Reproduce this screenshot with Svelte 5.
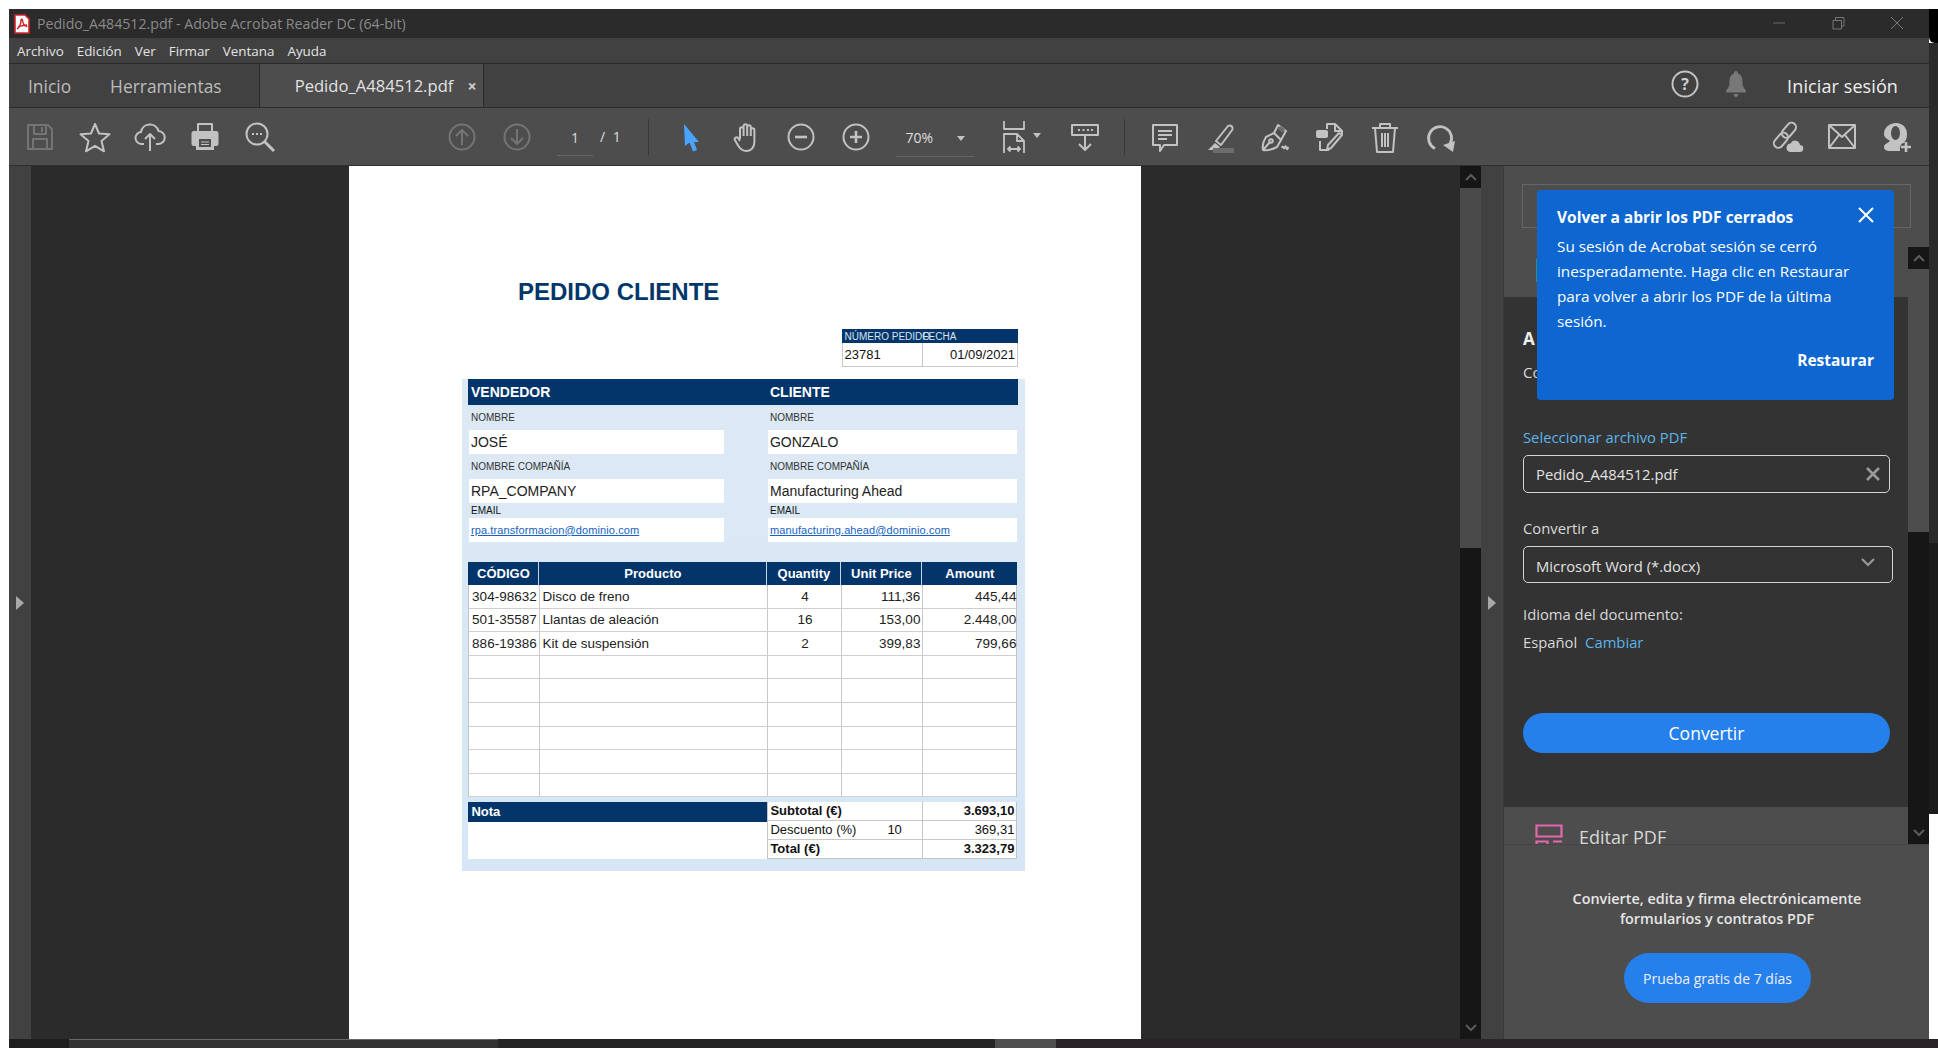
<script>
  const menu = [['Archivo',17],['Edición',84],['Ver',148],['Firmar',186],['Ventana',243],['Ayuda',312]];
  const items = [
    ['304-98632','Disco de freno','4','111,36','445,44'],
    ['501-35587','Llantas de aleación','16','153,00','2.448,00'],
    ['886-19386','Kit de suspensión','2','399,83','799,66'],
    ['','','','',''],['','','','',''],['','','','',''],['','','','',''],['','','','',''],['','','','','']
  ];
</script>

<div class="screen">
  <div class="topgap"></div>
  <div class="win">
    <header class="title">
      <svg class="pdf" width="16" height="20" viewBox="0 0 16 20"><path d="M1 1h10l4 4v14H1z" fill="#fff" stroke="#d4252a" stroke-width="1.6"/><path d="M3 15c3-2 4-6 4-9 0-1 1.500-1 1.500 0 0 3 2 6 5 6.500M4 13c3-1 6-2 9-2" fill="none" stroke="#d4252a" stroke-width="1.500"/></svg>
      <span class="ttext">Pedido_A484512.pdf - Adobe Acrobat Reader DC (64-bit)</span>
      <div class="wc">
        <svg width="16" height="16" viewBox="0 0 16 16"><path d="M2 8h12" stroke="#666" fill="none"/></svg>
        <svg width="16" height="16" viewBox="0 0 16 16"><path d="M3 5.500h8.500V14H3zM5.500 5V2.500H14V11h-2.500" stroke="#777" fill="none"/></svg>
        <svg width="16" height="16" viewBox="0 0 16 16"><path d="M2 2l12 12M14 2L2 14" stroke="#777" fill="none"/></svg>
      </div>
    </header>
    <nav class="menu">
      {#each menu as m}<span>{m[0]}</span>{/each}
    </nav>
    <div class="tabs">
      <span class="t1">Inicio</span>
      <span class="t2">Herramientas</span>
      <div class="tab"><span>Pedido_A484512.pdf</span><b>×</b></div>
      <div class="tright">
        <svg width="30" height="30" viewBox="0 0 30 30"><circle cx="15" cy="15" r="12.500" fill="none" stroke="#c4c4c4" stroke-width="2"/><text x="15" y="20.500" text-anchor="middle" class="q">?</text></svg>
        <svg class="bell" width="24" height="30" viewBox="0 0 24 30"><path d="M12 2c1.500 0 2 1 2 2.500 4 1.500 4.500 5 4.500 9 0 4 1.500 6 3.500 8v2H2v-2c2-2 3.500-4 3.500-8 0-4 .5-7.500 4.500-9C10 3 10.500 2 12 2zM9.500 25h5c0 1.500-1 3-2.500 3s-2.500-1.500-2.500-3z" fill="#787878"/></svg>
        <span class="login">Iniciar sesión</span>
      </div>
    </div>
    <div class="tools">
      <div class="btn dim"><svg width="32" height="32" viewBox="0 0 32 32"><path d="M4 4h20l4 4v20H4zM10 4v9h12V4M9 28V18h14v10M18 6v5"/></svg></div>
      <div class="btn"><svg width="32" height="32" viewBox="0 0 32 32"><path d="M16 3l4 9.500 10.500.8-8 6.800 2.500 10.200L16 24.800 7 30.300l2.500-10.200-8-6.800 10.500-.8z"/></svg></div>
      <div class="btn"><svg width="32" height="32" viewBox="0 0 32 32"><path d="M10 23H8a6 6 0 0 1-1-12 9 9 0 0 1 17.500-1A6.500 6.500 0 0 1 24 23h-2M16 30V13M11 18l5-5 5 5"/></svg></div>
      <div class="btn"><svg width="32" height="32" viewBox="0 0 32 32"><path d="M9 3h14v8H9z"/><path class="fill" d="M5 10h22a2.500 2.500 0 0 1 2.500 2.500V23a2 2 0 0 1-2 2H25v4H7v-4H4.500a2 2 0 0 1-2-2V12.500A2.500 2.500 0 0 1 5 10z"/><path class="hole" d="M10 18h12v8H10z"/><path class="fill" d="M12 20.500h8v1h-8zM12 23h8v1h-8z"/></svg></div>
      <div class="btn"><svg width="32" height="32" viewBox="0 0 32 32"><circle cx="13" cy="13" r="10.500"/><path d="M20.500 20.500L30 30" stroke-width="3"/><path class="fill" d="M8 12h2v2H8zM12 12h2v2h-2zM16 12h2v2h-2z"/></svg></div>

      <div class="btn dim up"><svg width="32" height="32" viewBox="0 0 32 32"><circle cx="16" cy="16" r="12.500"/><path d="M16 24V9M10 15l6-6 6 6"/></svg></div>
      <div class="btn dim"><svg width="32" height="32" viewBox="0 0 32 32"><circle cx="16" cy="16" r="12.500"/><path d="M16 8v15M10 17l6 6 6-6"/></svg></div>
      <div class="page"><span>1</span></div>
      <span class="of">/ 1</span>
      <i class="sep s1"></i>

      <div class="btn arrow"><svg width="32" height="32" viewBox="0 0 32 32"><path class="blue" d="M9 3l15 18h-5l3 8-4 1.500-3.500-9L10 25z"/></svg></div>
      <div class="btn"><svg width="32" height="32" viewBox="0 0 32 32"><path d="M10 18V8a1.800 1.800 0 0 1 3.600 0v7M13.600 15V5a1.800 1.800 0 0 1 3.600 0v10M17.200 15V6a1.800 1.800 0 0 1 3.600 0v9M20.800 15V9a1.800 1.800 0 0 1 3.600 0v12c0 5-3 9-8 9-4 0-6-2-8-5l-3.500-6a1.900 1.900 0 0 1 3.200-2L10 20"/></svg></div>
      <div class="btn"><svg width="32" height="32" viewBox="0 0 32 32"><circle cx="16" cy="16" r="12.500"/><path d="M10 16h12" stroke-width="2.600"/></svg></div>
      <div class="btn"><svg width="32" height="32" viewBox="0 0 32 32"><circle cx="16" cy="16" r="12.500"/><path d="M10 16h12M16 10v12" stroke-width="2.600"/></svg></div>
      <div class="zoomc"><span>70%</span><em></em></div>
      <div class="btn fit"><svg width="32" height="32" viewBox="0 0 32 32"><path d="M6 0v8h20V0M6 32V13h13l7 7v12M19 13v7h7M10 28h12M12.500 25.500L10 28l2.500 2.500M19.500 25.500L22 28l-2.500 2.500" stroke-width="1.800"/></svg><em></em></div>
      <div class="btn read"><svg width="32" height="32" viewBox="0 0 32 32"><path d="M3 4h26v10H3zM16 14v15M10 23l6 6 6-6"/><path class="fill" d="M9 8h2v2H9zM13.500 8h2v2h-2zM18 8h2v2h-2zM22 8h2v2h-2z"/></svg></div>
      <i class="sep s2"></i>

      <div class="btn"><svg width="32" height="32" viewBox="0 0 32 32"><path d="M4 4h24v20H15l-4 6v-6H4zM9 10h14M9 14h14M9 18h9"/></svg></div>
      <div class="btn"><svg width="32" height="32" viewBox="0 0 32 32"><path d="M12 20L24 5a3 3 0 0 1 4.500 3.500L17 24z"/><path class="fill" d="M11 22l-2 2-5 5h8l4-3z"/><path class="soft" d="M9 27h21v5H9z"/></svg></div>
      <div class="btn"><svg width="32" height="32" viewBox="0 0 32 32"><path d="M4 29c-1-5 1-10 3-13l8-4 7 7-4 7c-4 2-9 4-14 3zM4 29l7-8M15 12l4-8 8 6-5 9M23 27c1-4 1.500 2 2.500 0s1-3 2 0 1 0 2-1"/><circle cx="12" cy="20" r="1.800"/><path class="soft" d="M21 5l5 3-2 4-5-4z"/></svg></div>
      <div class="btn"><svg width="32" height="32" viewBox="0 0 32 32"><path d="M13 8V3h8l7 7v3M21 3v7h7M6 20v9h9"/><rect class="fill" x="2" y="9" width="12" height="8" rx="2"/><path d="M28 14L17 27l-4 2 1-5 11-12z"/></svg></div>
      <div class="btn"><svg width="32" height="32" viewBox="0 0 32 32"><path d="M3 7h26M11 7V3h10v4M6 7l2 24h16l2-24zM13 12v14M16 12v14M19 12v14"/></svg></div>
      <div class="btn"><svg width="32" height="32" viewBox="0 0 32 32"><path d="M11 27.500A11.500 11.500 0 1 1 26 23" stroke-width="2.800"/><path class="fill" d="M19 24l12-4-2 11z"/></svg></div>

      <div class="btn push"><svg width="32" height="32" viewBox="0 0 32 32"><rect x="13" y="1" width="9" height="17" rx="4.500" transform="rotate(40 18 10)"/><rect x="5" y="11" width="9" height="17" rx="4.500" transform="rotate(40 10 20)"/><path class="fill" d="M19 31h9.500a3.500 3.500 0 0 0 .5-7 5 5 0 0 0-9.500-1.500A4.300 4.300 0 0 0 19 31z"/></svg></div>
      <div class="btn"><svg width="32" height="32" viewBox="0 0 32 32"><path d="M3 4h26v23H3zM3 4l13 12L29 4M3 27l10-13M29 27L19 14"/></svg></div>
      <div class="btn"><svg width="32" height="32" viewBox="0 0 32 32"><path class="fill" d="M15 2c7 0 11 5 11 11 0 4-1 6-3 9-2 0-4 2-4 5v3H9c-3 0-6-1-6-4 0-3 4-4 6-6-2-2-6-3-6-7C3 7 8 2 15 2z"/><ellipse class="hole" cx="14.500" cy="12" rx="4.500" ry="7"/><path d="M25 21v10M20 26h10" stroke-width="2.600"/></svg></div>
    </div>

    <main class="content">
      <div class="hinge"><span class="tri"></span></div>
      <div class="doc">
        <article class="sheet">
          <h1>PEDIDO CLIENTE</h1>
          <div class="order">
            <div class="ohead"><span>NÚMERO PEDIDO</span><span>FECHA</span></div>
            <div class="orow"><span>23781</span><span>01/09/2021</span></div>
          </div>
          <section class="blue">
            <div class="band"><span>VENDEDOR</span><span>CLIENTE</span></div>
            <div class="form">
              <label>NOMBRE</label><label>NOMBRE</label>
              <div class="f">JOSÉ</div><div class="f">GONZALO</div>
              <label>NOMBRE COMPAÑÍA</label><label>NOMBRE COMPAÑÍA</label>
              <div class="f">RPA_COMPANY</div><div class="f">Manufacturing Ahead</div>
              <label class="dk">EMAIL</label><label class="dk">EMAIL</label>
              <div class="f link">rpa.transformacion@dominio.com</div><div class="f link">manufacturing.ahead@dominio.com</div>
            </div>
            <div class="thead grid"><span>CÓDIGO</span><span>Producto</span><span>Quantity</span><span>Unit Price</span><span>Amount</span></div>
            {#each items as r}
              <div class="trow grid"><span class="c">{r[0]}</span><span class="l">{r[1]}</span><span class="c">{r[2]}</span><span class="r">{r[3]}</span><span class="r">{r[4]}</span></div>
            {/each}
            <div class="foot">
              <div class="note"><div class="nh">Nota</div></div>
              <div class="sum">
                <div class="sr b"><span>Subtotal (€)</span><span>3.693,10</span></div>
                <div class="sr"><span class="dis"><span>Descuento (%)</span><span>10</span></span><span>369,31</span></div>
                <div class="sr b"><span>Total (€)</span><span>3.323,79</span></div>
              </div>
            </div>
          </section>
        </article>
      </div>
      <div class="sb1">
        <div class="sba"><svg width="14" height="10" viewBox="0 0 14 10"><path d="M2 8l5-5 5 5" fill="none" stroke="#5c5c5c" stroke-width="2"/></svg></div>
        <div class="thumb1"></div>
        <div class="sbrest"></div>
        <div class="sba"><svg width="14" height="10" viewBox="0 0 14 10"><path d="M2 2l5 5 5-5" fill="none" stroke="#5c5c5c" stroke-width="2"/></svg></div>
      </div>
      <div class="hinge h2"><span class="tri"></span></div>
      <aside class="panel">
        <div class="scroll">
          <div class="pcol">
            <div class="upper"><div class="outline"></div><div class="teal"></div></div>
            <div class="dark">
              <div class="h3">A</div>
              <div class="sub">Co</div>
              <div class="lab blue-t">Seleccionar archivo PDF</div>
              <div class="inp"><span>Pedido_A484512.pdf</span><svg width="16" height="16" viewBox="0 0 16 16"><path d="M2 2l12 12M14 2L2 14" stroke="#9a9a9a" stroke-width="2.600" fill="none"/></svg></div>
              <div class="lab conv">Convertir a</div>
              <div class="sel"><span>Microsoft Word (*.docx)</span><svg width="16" height="12" viewBox="0 0 16 12"><path d="M2 3l6 6 6-6" stroke="#9a9a9a" stroke-width="2.200" fill="none"/></svg></div>
              <div class="lab idi">Idioma del documento:</div>
              <div class="lab esp">Español <a>Cambiar</a></div>
              <div class="cbtn">Convertir</div>
            </div>
            <div class="lower">
              <svg width="28" height="24" viewBox="0 0 28 24"><path d="M1.500 1.500h25v11h-25zM1.500 17.500h11v8h-11zM18 17.500h9" fill="none" stroke="#e667ad" stroke-width="2.200"/></svg>
              <span>Editar PDF</span>
            </div>
          </div>
          <div class="sb2">
            <div class="sbtop"></div>
            <div class="sba"><svg width="14" height="10" viewBox="0 0 14 10"><path d="M2 8l5-5 5 5" fill="none" stroke="#5c5c5c" stroke-width="2"/></svg></div>
            <div class="thumb2"></div>
            <div class="sbrest"></div>
            <div class="sba"><svg width="14" height="10" viewBox="0 0 14 10"><path d="M2 2l5 5 5-5" fill="none" stroke="#5c5c5c" stroke-width="2"/></svg></div>
          </div>
        </div>
        <div class="promo">
          <p>Convierte, edita y firma electrónicamente<br>formularios y contratos PDF</p>
          <div class="trial">Prueba gratis de 7 días</div>
        </div>
        <div class="popup">
          <div class="phead"><strong>Volver a abrir los PDF cerrados</strong><svg width="16" height="16" viewBox="0 0 16 16"><path d="M1 1l14 14M15 1L1 15" stroke="#fff" stroke-width="2" fill="none"/></svg></div>
          <p>Su sesión de Acrobat sesión se cerró inesperadamente. Haga clic en Restaurar para volver a abrir los PDF de la última sesión.</p>
          <div class="restore">Restaurar</div>
        </div>
      </aside>
    </main>
  </div>
  <div class="sliver"><div class="blk"></div><div class="g1"></div><div class="g2"></div><div class="wh"></div></div>
  <footer class="strip">
    <i class="a"></i><i class="b"></i><i class="c"></i><i class="d"></i><i class="e"><span>10:22</span></i>
  </footer>
</div>

<style>
  :global(body){margin:0;background:#fff;}
  .screen{width:1938px;height:1048px;display:grid;grid-template-columns:9px 1920px 9px;grid-template-rows:9px 1030px 9px;overflow:hidden;font-family:"Open Sans","Noto Sans",sans-serif;}
  .topgap{grid-column:1/4;}
  .win{grid-column:2;grid-row:2;display:flex;flex-direction:column;background:#414141;min-height:0;}
  .sliver{grid-column:3;grid-row:2;display:flex;flex-direction:column;}
  .blk{height:34px;background:#000;border-bottom-left-radius:6px;}
  .g1{height:500px;background:#2a2a2a;}
  .g2{height:271px;background:#1b1b1b;}
  .wh{flex:1;background:#fff;}
  .strip{grid-column:2/4;grid-row:3;display:flex;background:#262326;overflow:hidden;}
  .strip i{display:block;height:9px;}
  .strip .a{width:60px;background:#1e1e1e;}
  .strip .b{width:429px;background:#333;border-top:1px solid #666;height:8px;}
  .strip .c{width:497px;background:#252525;}
  .strip .d{width:61px;background:#4f4f4f;}
  .strip .e{flex:1;position:relative;background:#282428;}
  .strip .e span{display:block;margin:5px 0 0 747px;font:13px/16px "Open Sans",sans-serif;color:#eee;font-style:normal;}

  .title{height:29px;background:#2b2b2b;display:flex;align-items:center;color:#8a8a8a;flex:none;}
  .pdf{margin-left:5px;}
  .ttext{margin-left:7px;font-size:14.2px;letter-spacing:-.02px;white-space:nowrap;}
  .wc{margin-left:auto;display:flex;gap:43px;padding-right:24px;margin-top:-2px;}

  .menu{height:25px;flex:none;display:flex;align-items:center;padding-left:8px;gap:13px;border-bottom:1px solid #2a2a2a;color:#e4e4e4;font-size:13.4px;}
  .tabs{height:43px;flex:none;display:flex;align-items:stretch;border-bottom:1px solid #2a2a2a;color:#bcbcbc;font-size:17.4px;}
  .t1{margin-left:19px;align-self:center;}
  .t2{margin-left:39px;align-self:center;}
  .tab{margin-left:37px;width:225px;background:#4d4d4d;border-left:1px solid #2a2a2a;border-right:1px solid #2a2a2a;display:flex;align-items:center;padding-left:35px;box-sizing:border-box;color:#e2e2e2;font-size:16.600px;}
  .tab b{margin-left:14px;font-size:16px;color:#ccc;}
  .tright{margin-left:auto;display:flex;align-items:center;padding-right:31px;}
  .tright svg{margin-top:-4px;}
  .bell{margin-left:24px;}
  .q{font:bold 16px "Open Sans",sans-serif;fill:#d0d0d0;}
  .login{margin-left:39px;font-size:18px;font-weight:500;color:#eee;letter-spacing:.1px;}

  .tools{height:57px;flex:none;background:#4d4d4d;border-bottom:1px solid #2f2f2f;display:flex;align-items:center;padding:0 4.500px 0 3.500px;color:#ddd;}
  .btn{width:55px;height:34px;display:flex;align-items:center;justify-content:center;flex:none;position:relative;}
  .btn svg{fill:none;stroke:#c2c2c2;stroke-width:2;stroke-linejoin:round;overflow:visible;}
  .btn.dim svg{stroke:#747474;}
  .fill{fill:#c2c2c2;stroke:none;}
  .btn svg .fill{fill:#c2c2c2;stroke:none;}
  .btn svg .hole{fill:#4d4d4d;stroke:none;}
  .btn svg .soft{fill:#6c6c6c;stroke:none;}
  .btn svg .blue{fill:#4aa3ff;stroke:none;}
  .up{margin-left:147px;}
  .page{margin-left:12.500px;width:36px;height:36px;border-bottom:1px solid #666;box-sizing:border-box;display:flex;align-items:center;justify-content:center;font-size:14px;margin-top:2px;}
  .of{margin-left:7px;font-size:14px;width:22px;white-space:pre;word-spacing:4px;}
  .sep{width:1px;height:36px;background:#383838;flex:none;}
  .s1{margin-left:26px;}
  .s1 + .btn{margin-left:14px;}
  .zoomc{margin-left:12.500px;width:78px;height:38px;border-bottom:1px solid #666;box-sizing:border-box;display:flex;align-items:center;padding-left:10px;font-size:14px;position:relative;margin-top:2px;}
  .zoomc em,.fit em{position:absolute;width:0;height:0;border:4px solid transparent;border-top:5px solid #c2c2c2;border-bottom:0;}
  .zoomc em{left:61px;top:17px;}
  .fit{margin-left:12.500px;}
  .fit svg{height:32px;}
  .fit em{left:47px;top:13px;}
  .read{margin-left:16px;}
  .s2{margin-left:12px;}
  .s2 + .btn{margin-left:12.500px;}
  .push{margin-left:auto;}

  .content{flex:1;display:flex;min-height:0;}
  .hinge{width:22px;background:#414141;display:flex;align-items:center;justify-content:center;flex:none;}
  .h2{width:23px;border-right:1px solid #3a3a3a;box-sizing:border-box;}
  .tri{width:0;height:0;border:7px solid transparent;border-left:8px solid #a8a8a8;border-right:0;}
  .doc{flex:1;background:#2b2b2b;padding-left:318px;overflow:hidden;min-width:0;}

  .sheet{width:792px;height:100%;background:#fff;box-sizing:border-box;padding-top:112px;font-family:"Liberation Sans Narrow","Liberation Sans",sans-serif;color:#111;overflow:hidden;}
  h1{margin:0 0 0 169px;font:bold 24px/28px "Liberation Sans",sans-serif;color:#03376b;white-space:nowrap;}
  .order{margin:23px 0 0 492.500px;width:176.500px;font-size:12px;}
  .ohead{height:14px;background:#03356a;color:#d8e4f0;display:flex;align-items:center;font-size:10px;}
  .ohead span:first-child{width:81px;padding-left:3px;box-sizing:border-box;white-space:nowrap;}
  .orow{height:24px;display:flex;border:solid #c8c8c8;border-width:0 1px 1px 1px;box-sizing:border-box;font-size:13px;align-items:stretch;}
  .orow span{display:flex;align-items:center;}
  .orow span:first-child{width:80px;padding-left:2px;box-sizing:border-box;border-right:1px solid #c8c8c8;}
  .orow span:last-child{flex:1;justify-content:flex-end;padding-right:2px;}
  .blue{margin:12px 0 0 113px;width:563px;height:492px;box-sizing:border-box;padding:0 7px 0 6.400px;background:linear-gradient(#dde9f5,#d6e6f6);}
  .band{height:26px;background:#03356a;color:#fff;font-weight:bold;font-size:14px;display:flex;align-items:center;}
  .band span:first-child{width:301.600px;padding-left:2.600px;box-sizing:border-box;}
  .form{display:grid;grid-template-columns:255px 249px;column-gap:44px;grid-template-rows:25px 24px 25px 24px 15px 24px;margin-left:.600px;}
  .form label{font-size:10px;color:#333;align-self:center;padding-left:2px;white-space:nowrap;}
  .form label.dk{color:#111;}
  .f{background:#fff;font-size:14px;display:flex;align-items:center;padding-left:2px;white-space:nowrap;color:#222;}
  .f.link{font-family:"Liberation Sans",sans-serif;font-size:11px;letter-spacing:.1px;color:#1562c4;text-decoration:underline;}
  .grid{display:grid;grid-template-columns:71px 228px 74px 81px 95px;width:549px;box-sizing:border-box;}
  .thead{margin-top:20px;height:23px;background:#03356a;color:#fff;font-size:13px;font-weight:bold;text-align:center;align-items:center;}
  .thead span{border-right:1px solid #c8d4e0;height:100%;display:flex;align-items:center;justify-content:center;box-sizing:border-box;}
  .thead span:last-child{border:0;}
  .trow{height:23.600px;background:#fff;border-bottom:1px solid #cfcfcf;border-left:1px solid #c4c4c4;border-right:1px solid #c4c4c4;font-size:13.500px;color:#222;}
  .trow span{display:flex;align-items:center;border-right:1px solid #c8c8c8;padding:0 2px;box-sizing:border-box;white-space:nowrap;overflow:hidden;}
  .trow span:last-child{border-right:0;}
  .c{justify-content:center;}
  .r{justify-content:flex-end;}
  .foot{margin-top:4.500px;display:flex;height:57px;width:549px;}
  .note{width:299px;background:#fff;}
  .nh{height:20px;background:#03356a;color:#fff;font-weight:bold;font-size:13px;display:flex;align-items:center;padding-left:3px;}
  .sum{flex:1;background:#fff;border:solid #c4c4c4;border-width:0 1px 1px 1px;box-sizing:border-box;display:flex;flex-direction:column;}
  .sr{flex:1;display:flex;justify-content:space-between;align-items:center;font-size:13px;padding:0 2px;border-bottom:1px solid #c8c8c8;position:relative;background:linear-gradient(90deg,transparent 154px,#c4c4c4 154px,#c4c4c4 155px,transparent 155px);}
  .sr:last-child{border-bottom:0;}
  .b{font-weight:bold;}
  .dis{display:flex;gap:31px;}

  .sb1,.sb2{width:21px;flex:none;background:#161616;display:flex;flex-direction:column;}
  .sba{height:22px;display:flex;align-items:center;justify-content:center;flex:none;background:#161616;}
  .thumb1{height:360px;background:#4a4a4a;}
  .thumb2{height:263px;background:#4d4d4d;}
  .sbrest{flex:1;}
  .sbtop{height:81px;background:#4d4d4d;}

  .panel{width:425px;flex:none;position:relative;display:flex;flex-direction:column;background:#4d4d4d;}
  .scroll{height:678px;display:flex;flex:none;overflow:hidden;}
  .pcol{width:404px;flex:none;display:flex;flex-direction:column;}
  .upper{height:131px;background:#4d4d4d;position:relative;padding:18px 0 0 18px;box-sizing:border-box;}
  .outline{width:389px;height:44px;border:1px solid #666;box-sizing:border-box;margin-right:-3px;}
  .teal{width:2px;height:23px;background:#2c8f8c;margin:31px 0 0 14px;}
  .dark{height:510px;background:#333;padding-left:19px;box-sizing:border-box;color:#d8d8d8;font-size:14.800px;position:relative;}
  .h3{margin-top:31px;font-size:17px;font-weight:700;line-height:22px;color:#eee;}
  .sub{margin-top:11px;font-size:15px;line-height:22px;}
  .lab{line-height:20px;white-space:nowrap;}
  .blue-t{margin-top:44px;color:#5cb4ea;}
  .inp{margin-top:8px;width:367px;height:38px;border:1px solid #d4d4d4;border-radius:5px;box-sizing:border-box;display:flex;align-items:center;justify-content:space-between;padding:0 8px 0 12px;color:#e2e2e2;}
  .conv{margin-top:25px;}
  .sel{margin-top:8px;width:370px;height:37px;border:1px solid #d4d4d4;border-radius:5px;box-sizing:border-box;display:flex;align-items:center;justify-content:space-between;padding:2px 16px 0 12px;color:#e2e2e2;}
  .sel svg{margin-top:-7px;}
  .idi{margin-top:21px;}
  .esp{margin-top:8px;}
  .esp a{color:#5cb4ea;margin-left:4px;}
  .cbtn{margin-top:61px;width:367px;height:40px;border-radius:20px;background:#2680eb;color:#fff;display:flex;align-items:center;justify-content:center;font-size:17.500px;}
  .lower{flex:1;min-height:0;overflow:hidden;background:#4d4d4d;display:flex;align-items:flex-start;padding:17px 0 0 31px;color:#d8d8d8;font-size:18px;}
  .lower span{margin:-2px 0 0 16px;line-height:30px;}

  .promo{flex:1;border-top:1px solid #444;box-sizing:border-box;text-align:center;padding-left:2px;color:#e6e6e6;width:425px;margin-right:0;}
  .promo p{margin:44px 0 0 -1px;font-size:14.400px;font-weight:600;line-height:20px;}
  .trial{margin:24px 0 0 118px;width:187px;height:50px;border-radius:25px;background:#2680eb;color:#eef;display:flex;align-items:center;justify-content:center;font-size:14px;}

  .popup{position:absolute;left:33px;top:24px;width:357px;height:210px;background:#0e66d0;border-radius:4px;box-sizing:border-box;padding:14px 20px 0 20px;color:#fff;font-size:15.300px;}
  .phead{display:flex;justify-content:space-between;align-items:center;height:26px;}
  .phead strong{font-size:15.500px;font-weight:700;white-space:nowrap;}
  .phead svg{margin:-4px 0 0 0;}
  .popup p{margin:4px 0 0;line-height:25px;}
  .restore{margin-top:15px;text-align:right;font-weight:700;font-size:15.500px;}
</style>
